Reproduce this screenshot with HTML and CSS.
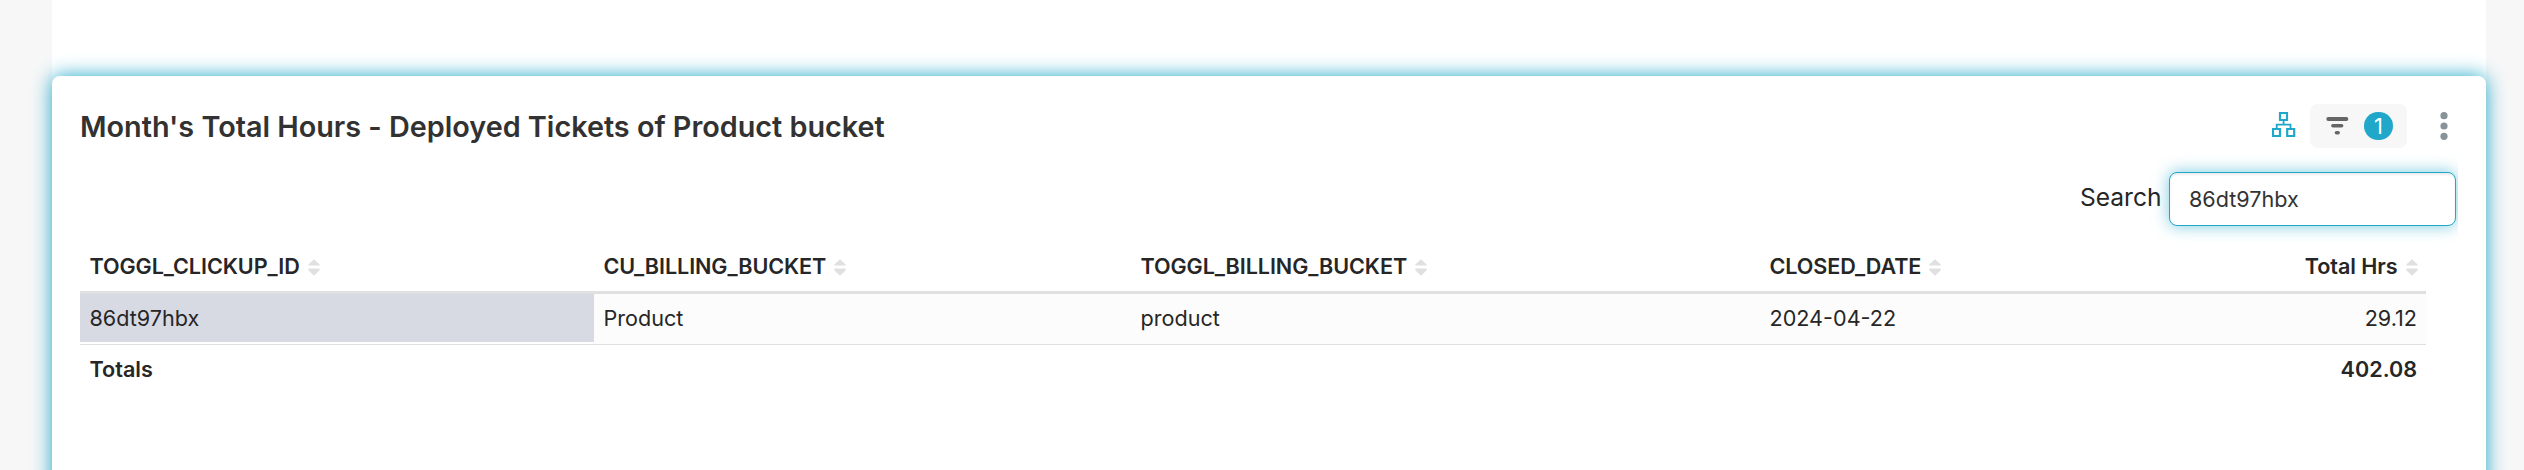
FILE: index.html
```html
<!DOCTYPE html>
<html lang="en">
<head>
<meta charset="utf-8">
<title>Month's Total Hours</title>
<link rel="stylesheet" href="styles.css">
</head>
<body>
<svg class="defs" width="0" height="0" aria-hidden="true">
  <symbol id="sort" viewBox="0 0 12 17"><path d="M6 .3 11.7 5.4Q12 6.6 11 6.6H1Q0 6.6 .3 5.4ZM6 16.7 11.7 11.2Q12 9.6 11 9.6H1Q0 9.6 .3 11.2Z" fill="#e0e0e0"/></symbol>
</svg>
<main class="dashboard">
  <section class="panel">
    <header class="panel-header">
      <h1 class="title">Month's Total Hours - Deployed Tickets of Product bucket</h1>
      <div class="controls">
        <svg class="sitemap" width="24" height="26" viewBox="0 0 24 26" fill="none" stroke="#20a7c9" stroke-width="2.2"><path d="M8 1h7v7H8zM1 17h7v7H1zM15.2 17h7v7h-7z"/><path d="M11.6 8v4.7M4.7 17v-4.3h13.8V17" stroke-width="1.8"/></svg>
        <div class="filter">
          <svg width="24" height="20" viewBox="0 0 24 20" stroke="#666" stroke-linecap="round"><path d="M3.2 3h18.2" stroke-width="3.8"/><path d="M7.9 9.8h8.7" stroke-width="3.6"/><path d="M11.5 16.8h1.6" stroke-width="3.6"/></svg>
          <span class="badge">1</span>
        </div>
        <svg class="more" width="8" height="28" viewBox="0 0 8 28" fill="#879399"><circle cx="4" cy="3.7" r="3.6"/><circle cx="4" cy="14" r="3.6"/><circle cx="4" cy="24.3" r="3.6"/></svg>
      </div>
    </header>
    <div class="search-row">
      <label class="search-label" for="search">Search</label>
      <input class="search-input" id="search" type="text" value="86dt97hbx">
    </div>
    <table class="data">
      <colgroup><col class="c-id"><col class="c-bucket"><col class="c-toggl"><col class="c-date"><col class="c-hrs"></colgroup>
      <thead>
        <tr>
          <th><span class="head">TOGGL_CLICKUP_ID<svg class="sort"><use href="#sort"/></svg></span></th>
          <th><span class="head">CU_BILLING_BUCKET<svg class="sort"><use href="#sort"/></svg></span></th>
          <th><span class="head">TOGGL_BILLING_BUCKET<svg class="sort"><use href="#sort"/></svg></span></th>
          <th><span class="head">CLOSED_DATE<svg class="sort"><use href="#sort"/></svg></span></th>
          <th class="num"><span class="head">Total Hrs<svg class="sort"><use href="#sort"/></svg></span></th>
        </tr>
      </thead>
      <tbody>
        <tr><td class="active">86dt97hbx</td><td>Product</td><td>product</td><td>2024-04-22</td><td class="num">29.12</td></tr>
      </tbody>
      <tfoot>
        <tr><td colspan="4">Totals</td><td class="num">402.08</td></tr>
      </tfoot>
    </table>
  </section>
</main>
</body>
</html>
```
FILE: styles.css
```css
* { box-sizing: border-box; }
body {
  margin: 0;
  background: #f7f7f7;
  color: #262626;
  font-family: Inter, "Liberation Sans", sans-serif;
}
.defs { display: block; }
.dashboard {
  height: 470px;
  padding: 0 38px 0 52px;
  overflow: hidden;
  background: linear-gradient(#fff, #fff) 52px 0 / 2434px 84px no-repeat;
}
.panel {
  height: 440px;
  margin-top: 76px;
  padding: 28px;
  background: #fff;
  border-radius: 8px;
  box-shadow: 0 0 20px #20a7c9;
}
.panel-header {
  display: flex;
  justify-content: space-between;
  height: 44px;
}
.title {
  margin: 0;
  color: #323232;
  font-size: 28.8px;
  font-weight: 600;
  line-height: 45px;
  letter-spacing: -.01px;
  white-space: nowrap;
}
.controls {
  display: flex;
  align-items: center;
  margin-right: 10.5px;
}
.sitemap { margin: -2px 14px 0 0; }
.filter {
  display: flex;
  align-items: center;
  width: 97px;
  height: 44px;
  margin-right: 32.5px;
  padding-left: 15px;
  background: #f7f7f7;
  border-radius: 8px;
}
.badge {
  width: 29px;
  height: 28px;
  margin-left: 15px;
  border-radius: 14px;
  background: #20a7c9;
  color: #fff;
  font-size: 22px;
  line-height: 28px;
  text-align: center;
}
.search-row {
  display: flex;
  justify-content: flex-end;
  align-items: center;
  height: 96px;
  margin-left: 1900px;
  padding: 10px 2px 0 0;
  overflow: hidden;
}
.search-label {
  margin: -8px 7.5px 0 0;
  font-size: 24.6px;
}
.search-input {
  width: 287px;
  height: 54px;
  margin-top: -4px;
  padding: 0 19px;
  border: 1px solid #20a7c9;
  border-radius: 8px;
  outline: none;
  background: #fff;
  color: #333;
  box-shadow: inset 0 2px 2px rgba(0, 0, 0, .075), 0 0 16px rgba(32, 167, 201, .6);
  font: 21.6px Inter, "Liberation Sans", sans-serif;
}
.data {
  width: 2346px;
  table-layout: fixed;
  border-collapse: separate;
  border-spacing: 0;
  font-size: 21.6px;
}
.c-id { width: 514px; }
.c-bucket { width: 537px; }
.c-toggl { width: 629px; }
.c-date { width: 400px; }
.data th {
  height: 50px;
  padding: 0 8.5px 3px 9.5px;
  border-bottom: 3px solid #e0e0e0;
  font-weight: 600;
  letter-spacing: -.08px;
  text-align: left;
}
.head { display: inline-flex; align-items: center; }
.sort { width: 12px; height: 17px; margin: 2px 0 0 8px; }
.data td {
  height: 51px;
  padding: 0 9px 2px 9.5px;
}
.data tbody td {
  background: #fcfcfc;
  border-bottom: 1px solid #e0e0e0;
}
.data tbody .active {
  background: linear-gradient(#d8dae3, #d8dae3) 0 0 / 100% 48px no-repeat #fff;
}
.data tfoot td {
  padding-bottom: 3px;
  font-weight: 600;
}
.data .num { text-align: right; }
```
